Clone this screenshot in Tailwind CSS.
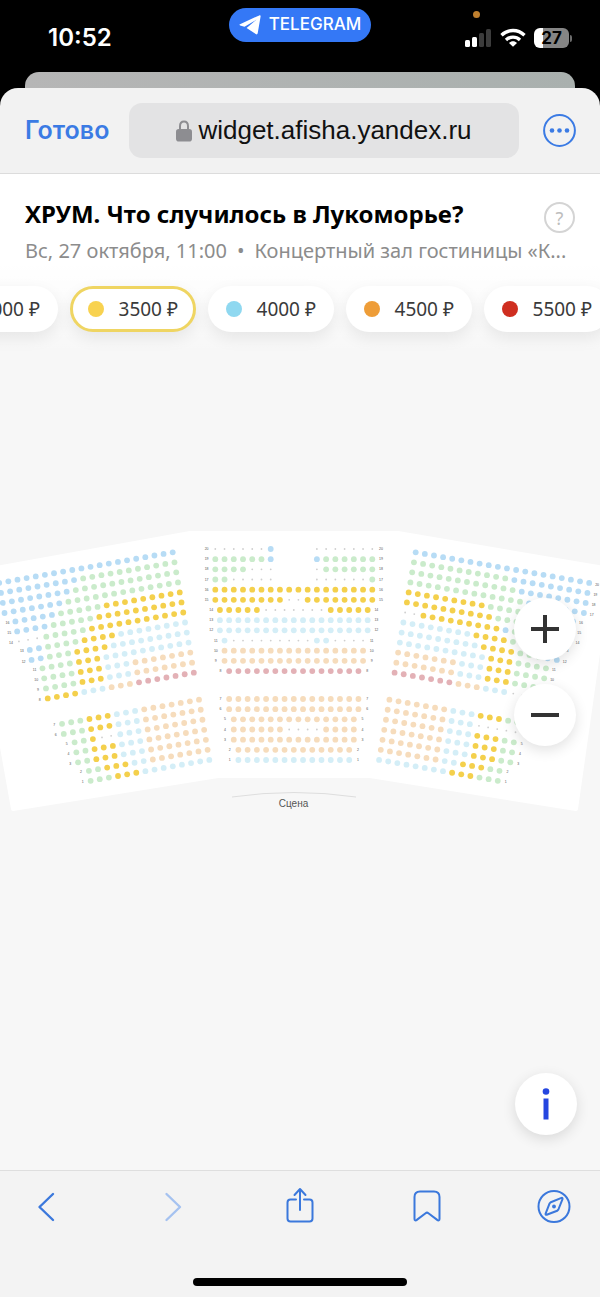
<!DOCTYPE html>
<html lang="ru">
<head>
    <meta charset="UTF-8">
    <meta name="viewport" content="width=device-width, initial-scale=1.0">
    <title>ХРУМ. Что случилось в Лукоморье?</title>
    <script src="https://cdn.jsdelivr.net/npm/@tailwindcss/browser@4"></script>
</head>
<body class="bg-black font-['Inter','Liberation_Sans',sans-serif]">
<div class="min-h-screen flex flex-col">

    <!-- Status bar -->
    <div class="h-[72px] grid grid-cols-3 text-white">
        <div class="pl-12 pt-6 text-2xl leading-7 font-semibold">10:52</div>
        <div class="flex justify-center items-start pt-2">
            <a href="#" class="h-[34px] w-[142px] rounded-full bg-[#3478f6] flex items-center justify-center gap-2 text-[17px] font-medium">
                <svg class="w-[22px] h-5" viewBox="0 0 22 20" fill="#fff"><path d="M1 9.200 20.200.4c1-.4 1.600 0 1.400 1L18.700 18.300c-.2 1.100-1 1.400-1.900.8L7.600 12.900 17.500 4.600 5.500 11.800 1.100 10.500c-.9-.3-.9-.9-.1-1.300Z"/></svg>
                <span>TELEGRAM</span>
            </a>
        </div>
        <div class="relative flex justify-end items-start gap-2 pr-7 pt-7">
            <span class="absolute top-[11px] right-[120px] size-[7px] rounded-full bg-[#bf7f2e]"></span>
            <svg class="w-[27px] h-5" viewBox="0 0 27 20">
                <g fill="#fff"><rect x="0" y="12" width="5" height="7" rx="1.500"/><rect x="7" y="9" width="5" height="10" rx="1.500"/></g>
                <g fill="#3c3c3c"><rect x="14" y="5" width="5" height="14" rx="1.500"/><rect x="21" y="1" width="5" height="18" rx="1.500"/></g>
            </svg>
            <svg class="w-[26px] h-5" viewBox="0 0 26 20" fill="none" stroke="#fff" stroke-width="3.400">
                <path d="M1.500 7.200C8.100.9 17.900.9 24.500 7.200"/><path d="M6 11.900c4-3.700 10-3.700 14 0"/>
                <path d="M13 18.800 9 14.900c2.300-2.100 5.700-2.100 8 0Z" fill="#fff" stroke="none"/>
            </svg>
            <div class="flex items-center gap-px">
                <div class="w-[35px] h-5 rounded-md bg-linear-to-r from-white from-27% to-[#858585] to-27% text-black text-[17px] leading-5 font-bold text-center">27</div>
                <span class="w-[2px] h-[7px] rounded-r-full bg-[#6b6b6b]"></span>
            </div>
        </div>
    </div>

    <!-- Sheet behind the browser -->
    <div class="h-4 mx-[25px] rounded-t-[14px] bg-linear-to-r from-[#b6b6b6] to-[#a9b0ae]"></div>

    <!-- Browser bar -->
    <div class="h-[86px] rounded-t-[18px] bg-[#f2f2f2] border-b border-[#dcdcdc] flex items-center pl-[25px] pr-6">
        <button class="w-[104px] shrink-0 text-left text-[25px] font-semibold text-[#3b7be4]">Готово</button>
        <div class="flex-1 h-[55px] rounded-[13px] bg-[#e3e3e4] flex items-center justify-center gap-[6px]">
            <svg class="w-4 h-[22px] shrink-0" viewBox="0 0 16 22"><path d="M4 10V6.200C4 3.300 5.600 1.600 8 1.600s4 1.700 4 4.600V10" fill="none" stroke="#8d8d91" stroke-width="2"/><rect x="0" y="9" width="16" height="12.500" rx="2.800" fill="#8d8d91"/></svg>
            <span class="font-['Liberation_Sans',sans-serif] text-[26px] text-[#111]">widget.afisha.yandex.ru</span>
        </div>
        <button aria-label="Меню" class="ml-6 shrink-0">
            <svg class="w-[33px] h-[33px]" viewBox="0 0 33 33"><circle cx="16.500" cy="16.500" r="15.400" fill="none" stroke="#3b7be4" stroke-width="2"/><g fill="#3b7be4"><circle cx="9" cy="16.500" r="2.300"/><circle cx="16.500" cy="16.500" r="2.300"/><circle cx="24" cy="16.500" r="2.300"/></g></svg>
        </button>
    </div>

    <!-- Widget: the header lies over the top of the hall map -->
    <main class="relative flex-1 grid bg-[#f7f7f7] overflow-hidden font-['Noto_Sans','Open_Sans',sans-serif]">
        <section class="[grid-area:1/1] flex items-center min-w-0">
            <svg id="hall" class="w-full" viewBox="0 522 600 300" font-family="Liberation Sans, sans-serif" text-anchor="middle">
                <path d="M-10 569 190 533H398L610 569 576 809 370 776H218L13 809-10 680Z" fill="#fff" stroke="#fff" stroke-width="4" stroke-linejoin="round"/>
                <path d="M232 797Q294 788 356 797" fill="none" stroke="#dedede"/>
                <text x="293.500" y="807" font-size="10" fill="#555">Сцена</text>
            </svg>
        </section>

        <header class="[grid-area:1/1] self-start min-w-0 h-[180px] bg-linear-to-b from-white from-50% to-white/0">
            <div class="flex items-start justify-between px-[25px] pt-6">
                <h1 class="text-2xl leading-8 font-bold text-black">ХРУМ. Что случилось в Лукоморье?</h1>
                <button aria-label="Помощь" class="mt-1 size-[31px] shrink-0 rounded-full border-2 border-[#d4d4d4] text-lg leading-none text-[#bdbdbd]">?</button>
            </div>
            <p class="pl-[25px] mt-1 text-[20px] leading-7 text-[#8c8c8c] whitespace-nowrap flex gap-[10px]"><span>Вс, 27 октября, 11:00</span><span>•</span><span>Концертный зал гостиницы «К...</span></p>
            <div class="-ml-[68px] mt-[21px] flex gap-3 text-[19px] text-[#3a3a3a]">
                <button class="w-[126px] h-[46px] shrink-0 rounded-full bg-white shadow-[0_6px_16px_rgba(0,0,0,0.08)] flex items-center justify-between px-[18px]"><span class="size-4 rounded-full bg-[#8fd18f]"></span>3000 ₽</button>
                <button class="w-[126px] h-[46px] shrink-0 rounded-full bg-white shadow-[0_6px_16px_rgba(0,0,0,0.08)] flex items-center justify-between px-[15px] border-3 border-[#efd562]"><span class="size-4 rounded-full bg-[#f8d250]"></span>3500 ₽</button>
                <button class="w-[126px] h-[46px] shrink-0 rounded-full bg-white shadow-[0_6px_16px_rgba(0,0,0,0.08)] flex items-center justify-between px-[18px]"><span class="size-4 rounded-full bg-[#8fd8f0]"></span>4000 ₽</button>
                <button class="w-[126px] h-[46px] shrink-0 rounded-full bg-white shadow-[0_6px_16px_rgba(0,0,0,0.08)] flex items-center justify-between px-[18px]"><span class="size-4 rounded-full bg-[#ee9d38]"></span>4500 ₽</button>
                <button class="w-[126px] h-[46px] shrink-0 rounded-full bg-white shadow-[0_6px_16px_rgba(0,0,0,0.08)] flex items-center justify-between px-[18px]"><span class="size-4 rounded-full bg-[#cf2e20]"></span>5500 ₽</button>
            </div>
        </header>

        <div class="absolute right-6 top-1/2 -translate-y-1/2 flex flex-col gap-6">
            <button aria-label="Приблизить" class="size-[62px] rounded-full bg-white shadow-[0_4px_14px_rgba(0,0,0,0.12)] flex items-center justify-center">
                <svg class="size-7" viewBox="0 0 28 28" stroke="#333" stroke-width="4"><path d="M0 14H28M14 0V28"/></svg>
            </button>
            <button aria-label="Отдалить" class="size-[62px] rounded-full bg-white shadow-[0_4px_14px_rgba(0,0,0,0.12)] flex items-center justify-center">
                <svg class="size-7" viewBox="0 0 28 28" stroke="#333" stroke-width="4"><path d="M0 14H28"/></svg>
            </button>
        </div>
        <button aria-label="Информация" class="absolute right-[23px] bottom-[35px] size-[62px] rounded-full bg-white shadow-[0_4px_14px_rgba(0,0,0,0.12)] flex items-center justify-center">
            <svg class="w-2 h-8" viewBox="0 0 8 32" fill="#2546e0"><circle cx="4" cy="3.500" r="3.300"/><rect x="1.500" y="10.500" width="5" height="21"/></svg>
        </button>
    </main>

    <!-- Browser toolbar -->
    <nav class="h-[127px] bg-[#f3f3f3] border-t border-[#dedede] flex flex-col justify-between items-center pt-[18px] pb-[11px]">
        <div class="w-full px-[29px] flex justify-between">
            <button aria-label="Назад"><svg class="size-[34px]" viewBox="0 0 34 34" fill="none" stroke="#3b78dc" stroke-width="2.400" stroke-linecap="round" stroke-linejoin="round"><path d="M24 5 10.500 18 24 31"/></svg></button>
            <button aria-label="Вперёд" disabled><svg class="size-[34px]" viewBox="0 0 34 34" fill="none" stroke="#a5c2f0" stroke-width="2.400" stroke-linecap="round" stroke-linejoin="round"><path d="M10.500 5 24 18 10.500 31"/></svg></button>
            <button aria-label="Поделиться"><svg class="size-[34px] overflow-visible" viewBox="0 0 34 34" fill="none" stroke="#3b78dc" stroke-width="2" stroke-linecap="round" stroke-linejoin="round"><path d="M13 10.500H7.500Q4.500 10.500 4.500 13.500V29.500Q4.500 32.500 7.500 32.500H26.500Q29.500 32.500 29.500 29.500V13.500Q29.500 10.500 26.500 10.500H21M17 21V0.500M11.500 6 17 0 22.500 6"/></svg></button>
            <button aria-label="Закладки"><svg class="size-[34px]" viewBox="0 0 34 34" fill="none" stroke="#3b78dc" stroke-width="2" stroke-linejoin="round"><path d="M4.500 8Q4.500 2.500 10 2.500H24Q29.500 2.500 29.500 8V30C29.500 31.500 28.300 31.900 27.200 30.900L18.400 24.200Q17 23.100 15.600 24.200L6.800 30.900C5.700 31.900 4.500 31.500 4.500 30Z"/></svg></button>
            <button aria-label="Открыть в Safari"><svg class="size-[34px]" viewBox="0 0 34 34" fill="none" stroke="#3b78dc" stroke-width="2" stroke-linejoin="round"><circle cx="17" cy="17.500" r="15.500"/><path d="M24.500 8.900 13.800 13.200 12.600 14.400 8.600 24.600Q8.300 26 9.700 25.800L20.200 21.700 21.400 20.500 25.500 10.200Q25.800 8.700 24.500 8.900Z"/><circle cx="17" cy="17.500" r="1.900" fill="#3b78dc" stroke="none"/></svg></button>
        </div>
        <div class="w-[214px] h-2 rounded-full bg-black"></div>
    </nav>
</div>

<script>
    // One letter per seat: price colour, "." for a sold seat, space for a gap
    const colors = { b: '#b7dcf5', g: '#caebcb', y: '#f4d04c', c: '#d4eef7', o: '#f6dcbc', r: '#e3b1b6' };
    const hall = document.getElementById('hall');

    function add(tag, attrs, text) {
        const el = document.createElementNS('http://www.w3.org/2000/svg', tag);
        for (const key in attrs) el.setAttribute(key, attrs[key]);
        if (text) el.textContent = text;
        hall.appendChild(el);
    }
    function seat(x, y, kind) {
        if (kind === ' ') return;
        if (kind === '.') add('circle', { cx: x, cy: y, r: 0.9, fill: '#cfcfcf' });
        else add('circle', { cx: x, cy: y, r: 2.9, fill: colors[kind] });
    }
    function label(x, y, num) {
        if (x < 3) return;
        add('text', { x: x, y: y + 1, 'font-size': 3.5, fill: '#555' }, String(num));
    }

    // Rows go from 20 down to 1, with an aisle between 8 and 7
    const center = [
        '......b    .......', 'ggggggb    bgggggg', 'gggg...    .gggggg', 'gg.....    ......g',
        'yyyyyyyyyyyyyyyyyy', 'yyyyyyyy..yyyyyyyy', 'yyyyy.......yyyyy', 'ccccccccccccccccc',
        'ccccccccccccccccc', 'c.........cc....', 'oooooooooooooooo', 'oooooooooooooooo', 'rrrrrrrrrrrrrrr',
        'ooooooooooooooo', 'ooooooooooooooo', 'oooooooooooooo', 'oooooo....oooo', 'oooooooooooooo',
        'ooooooooooooo', 'ccccccccccccc'
    ];
    const left = [
        'bbbbbbbbbbbbbbbbbbbb', 'gggggggggggbbbbbbbbb', 'ggggggggggggbbbbbbbb', 'gggggggggggggbbbbbbb',
        'yyyyyyyyygggggbbbbb', 'yyyyyyyyyygggggbbbb', 'yyyyyyyyyyyggggg...', 'ccccccccyyyyggggbb',
        'cccccccccyyyygggbb', 'ccccccccccyyygggg', 'ooooooocccyyygggg', 'ooooooocccyyygggg', 'rrrrrrroooccc' + 'yyyy',
        'ooooooocccyyyggg', 'ooooooocccyyyggg', 'oooooooccc..ygg', 'ooooooocccyyygg', 'ooooooocccyyygg',
        'oooooooccyyygg', 'ccccccccyyyggg'
    ];
    const right = left.slice();
    right[6] = '..yyyyyyyyybggggbbb';
    right[12] = 'rrrrrrroooccc....';
    right[14] = 'oooooooccc......';
    right[15] = 'ooooooocccyyygg';

    center.forEach((row, i) => {
        const y = i < 13 ? 549 + 10.17 * i : 699 + 10.17 * (i - 13);
        const start = 293.8 - 9.235 * (row.length - 1) / 2;
        [...row].forEach((kind, n) => seat(start + 9.235 * n, y, kind));
        label(start - 8.7, y, 20 - i);
        label(293.8 * 2 - start + 8.7, y, 20 - i);
    });

    // Side blocks are mirror images around x = 294.2
    function side(rows, dir) {
        rows.forEach((row, i) => {
            const x = i < 13 ? 121.5 - 1.76 * i : 95.2 - 1.72 * (i - 13);
            const y = i < 13 ? 552.3 + 10.03 * i : 699.7 + 10.03 * (i - 13);
            [...row].forEach((kind, n) => seat(294.2 + dir * (x + 9.13 * n), y + 1.61 * n, kind));
            label(294.2 + dir * (x + 9.13 * row.length - 1.2), y + 1.61 * row.length, 20 - i);
        });
    }
    side(left, -1);
    side(right, 1);
</script>
</body>
</html>
